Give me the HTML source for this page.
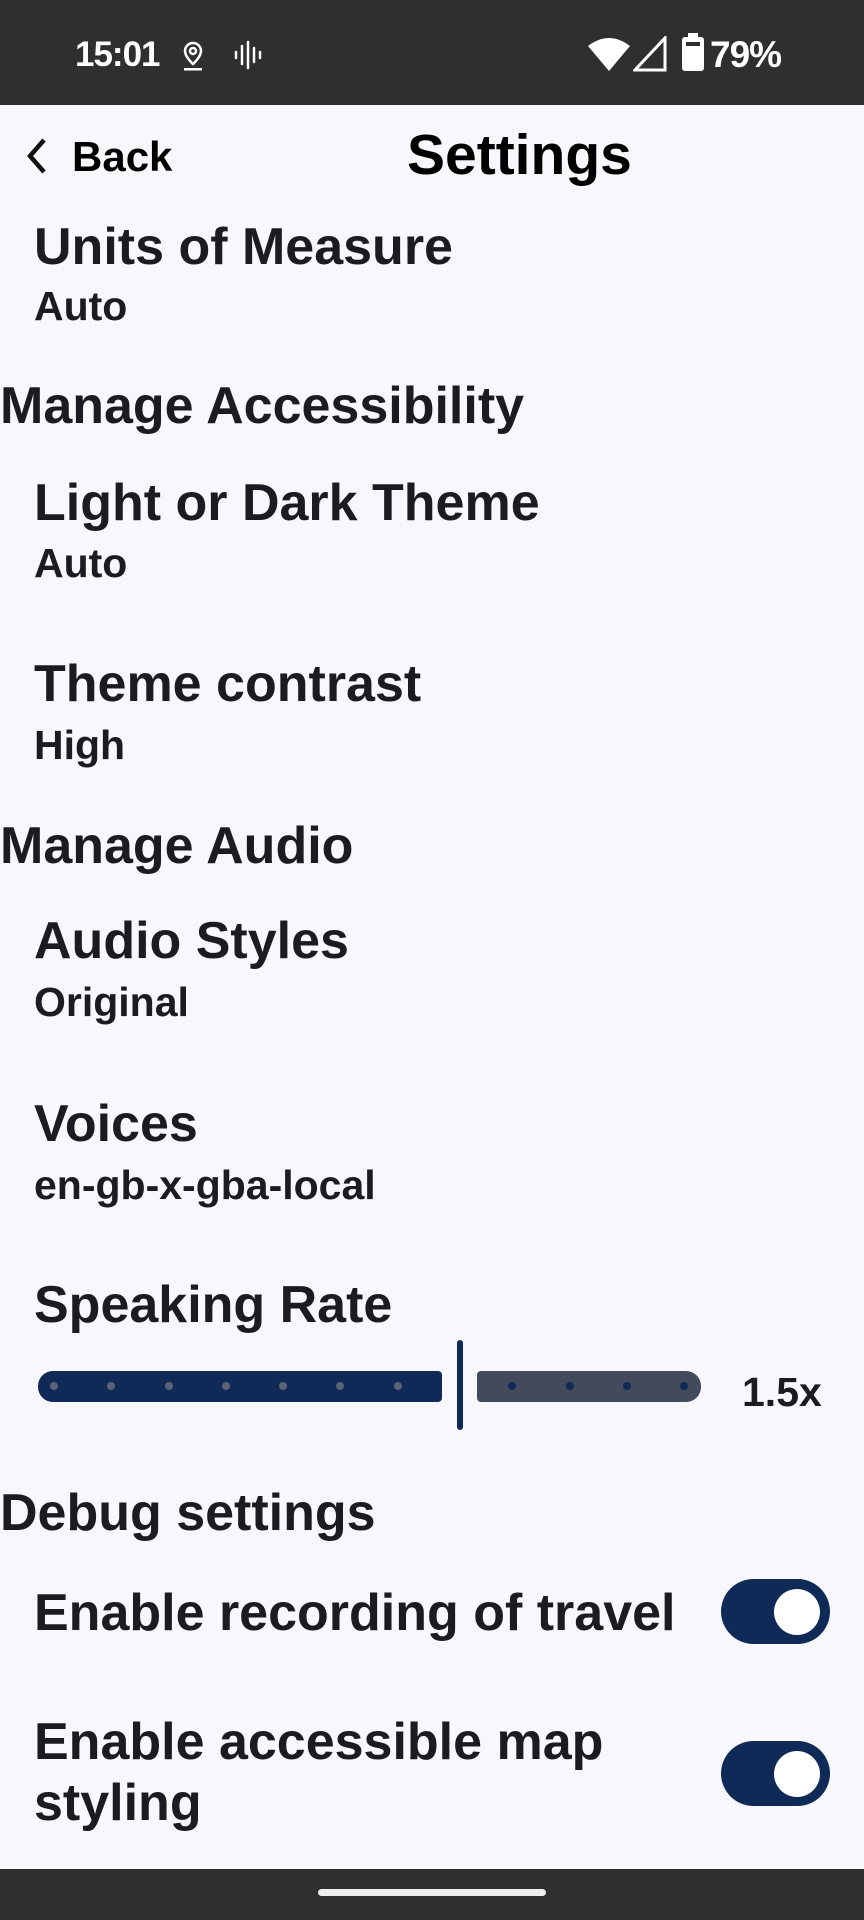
<!DOCTYPE html>
<html><head><meta charset="utf-8">
<style>
*{margin:0;padding:0;box-sizing:border-box}
body{width:864px;height:1920px;background:#f7f7fc;font-family:"Liberation Sans",Arial,sans-serif;font-weight:bold;color:#1b1b21;position:relative;overflow:hidden}
.t{position:absolute;white-space:nowrap;line-height:1}
.h{font-size:52px;margin-top:4px}
.s{font-size:41px;margin-top:3px}
.sb{position:absolute;left:0;top:0;width:864px;height:105px;background:#2f2f2f}
.nb{position:absolute;left:0;top:1869px;width:864px;height:51px;background:#2f2f2f}
.tog{position:absolute;left:721px;width:109px;height:65px;border-radius:33px;background:#0f2a57}
.tog::after{content:"";position:absolute;right:10px;top:10px;width:46px;height:46px;border-radius:50%;background:#fff}
.dot{position:absolute;width:8px;height:8px;border-radius:50%;top:1382px}
</style></head><body>
<div class="sb">
  <div class="t" style="left:75px;top:37px;font-size:35px;color:#fff;font-weight:bold;letter-spacing:-1px">15:01</div>
  <svg style="position:absolute;left:180px;top:40px" width="26" height="32" viewBox="0 0 26 32"><path d="M13 3a8 8 0 0 0-8 8c0 6 8 13 8 13s8-7 8-13a8 8 0 0 0-8-8z" fill="none" stroke="#fff" stroke-width="2.5"/><circle cx="13" cy="11" r="3" fill="none" stroke="#fff" stroke-width="2.5"/><rect x="4" y="28" width="18" height="2.5" fill="#fff"/></svg>
  <svg style="position:absolute;left:233px;top:40px" width="30" height="30" viewBox="0 0 30 30"><g stroke="#fff" stroke-width="2.5" stroke-linecap="round"><line x1="3" y1="12" x2="3" y2="18"/><line x1="9" y1="6" x2="9" y2="24"/><line x1="15" y1="2" x2="15" y2="28"/><line x1="21" y1="8" x2="21" y2="22"/><line x1="27" y1="12" x2="27" y2="18"/></g></svg>
  <svg style="position:absolute;left:587px;top:36px" width="44" height="36" viewBox="0 0 44 36"><path d="M1 10 Q22 -6 43 10 L22 35 Z" fill="#fff"/></svg>
  <svg style="position:absolute;left:633px;top:36px" width="34" height="36" viewBox="0 0 34 36"><path d="M32 2 L32 34 L2 34 Z" fill="none" stroke="#fff" stroke-width="3"/></svg>
  <svg style="position:absolute;left:681px;top:32px" width="24" height="40" viewBox="0 0 24 40"><rect x="7" y="1" width="10" height="5" fill="#fff"/><rect x="1" y="5" width="22" height="34" rx="3" fill="#fff"/><rect x="5" y="10" width="14" height="4" fill="#2f2f2f"/></svg>
  <div class="t" style="left:710px;top:36px;font-size:37px;color:#fff;font-weight:bold;letter-spacing:-1px">79%</div>
</div>

<svg style="position:absolute;left:25px;top:137px" width="24" height="38" viewBox="0 0 24 38"><path d="M19 3 L5 19 L19 35" fill="none" stroke="#111" stroke-width="4.5" stroke-linejoin="miter"/></svg>
<div class="t" style="left:72px;top:136px;font-size:42px;color:#000">Back</div>
<div class="t" style="left:407px;top:127px;font-size:57px;color:#000">Settings</div>

<div class="t h" style="left:34px;top:217px">Units of Measure</div>
<div class="t s" style="left:34px;top:283px">Auto</div>
<div class="t h" style="left:0;top:376px">Manage Accessibility</div>
<div class="t h" style="left:34px;top:473px">Light or Dark Theme</div>
<div class="t s" style="left:34px;top:540px">Auto</div>
<div class="t h" style="left:34px;top:654px">Theme contrast</div>
<div class="t s" style="left:34px;top:722px">High</div>
<div class="t h" style="left:0;top:816px">Manage Audio</div>
<div class="t h" style="left:34px;top:911px">Audio Styles</div>
<div class="t s" style="left:34px;top:979px">Original</div>
<div class="t h" style="left:34px;top:1094px">Voices</div>
<div class="t s" style="left:34px;top:1162px">en-gb-x-gba-local</div>
<div class="t h" style="left:34px;top:1275px">Speaking Rate</div>

<div style="position:absolute;left:38px;top:1371px;width:404px;height:31px;background:#0f2a57;border-radius:15px 4px 4px 15px"></div>
<div style="position:absolute;left:477px;top:1371px;width:224px;height:31px;background:#434a5c;border-radius:4px 15px 15px 4px"></div>
<div style="position:absolute;left:457px;top:1340px;width:6px;height:90px;background:#0f2a57;border-radius:3px"></div>
<div class="dot" style="left:50px;background:#5b6275"></div>
<div class="dot" style="left:107px;background:#5b6275"></div>
<div class="dot" style="left:165px;background:#5b6275"></div>
<div class="dot" style="left:222px;background:#5b6275"></div>
<div class="dot" style="left:279px;background:#5b6275"></div>
<div class="dot" style="left:336px;background:#5b6275"></div>
<div class="dot" style="left:394px;background:#5b6275"></div>
<div class="dot" style="left:508px;background:#0f2a57"></div>
<div class="dot" style="left:566px;background:#0f2a57"></div>
<div class="dot" style="left:623px;background:#0f2a57"></div>
<div class="dot" style="left:680px;background:#0f2a57"></div>
<div class="t s" style="left:742px;top:1369px">1.5x</div>

<div class="t h" style="left:0;top:1483px">Debug settings</div>
<div class="t h" style="left:34px;top:1583px">Enable recording of travel</div>
<div class="tog" style="top:1579px"></div>
<div class="t h" style="left:34px;top:1712px">Enable accessible map</div>
<div class="t h" style="left:34px;top:1773px">styling</div>
<div class="tog" style="top:1741px"></div>

<div class="nb"><div style="position:absolute;left:318px;top:20px;width:228px;height:7px;border-radius:4px;background:#eee"></div></div>
</body></html>
